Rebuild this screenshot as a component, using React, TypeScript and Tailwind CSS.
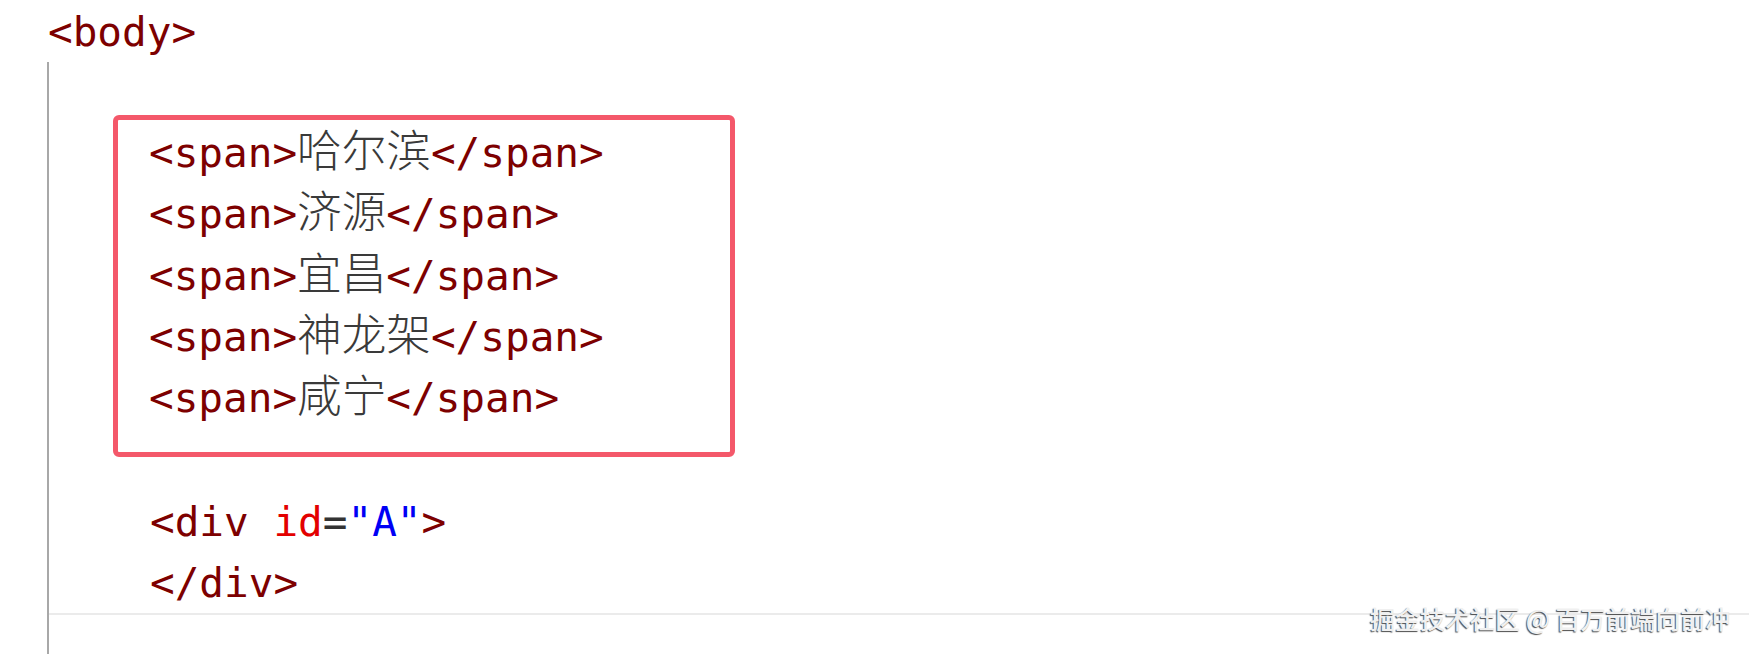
import React from 'react';

const cities = ['哈尔滨', '济源', '宜昌', '神龙架', '咸宁'];

const Tag: React.FC<{ children: React.ReactNode }> = ({ children }) => (
  <span className="text-[#7d0000]">{children}</span>
);

const App: React.FC = () => {
  return (
    <div className="relative w-[1749px] h-[654px] overflow-hidden bg-white font-['DejaVu_Sans_Mono',monospace] text-[41px] leading-[61.25px] text-[#7d0000]">
      {/* opening body tag */}
      <div className="h-[62px] pt-[1.5px] pl-[48px] whitespace-pre">
        <Tag>&lt;body&gt;</Tag>
      </div>

      {/* indented block with guide line */}
      <div className="ml-[47px] h-[592px] border-l-2 border-[#a8a8a8] flex flex-col">
        <div className="h-[53px] shrink-0" />

        {/* highlighted spans */}
        <div className="ml-[64px] w-[622px] shrink-0 border-[5px] border-[#f4586a] rounded-[6px] pt-[3px] pb-[22.75px] pl-[31px]">
          {cities.map((city) => (
            <div key={city} className="h-[61.25px] whitespace-pre">
              <Tag>&lt;span&gt;</Tag>
              <span className="font-['Noto_Sans_CJK_SC',sans-serif] font-light text-[44.6px] leading-none text-[#3a3a3a]">
                {city}
              </span>
              <Tag>&lt;/span&gt;</Tag>
            </div>
          ))}
        </div>

        <div className="h-[35px] shrink-0" />

        <div className="h-[61px] shrink-0 pl-[101px] whitespace-pre">
          <Tag>&lt;div </Tag>
          <span className="text-[#e30000]">id</span>
          <span className="text-[#333333]">=</span>
          <span className="text-[#0000f5]">"A"</span>
          <Tag>&gt;</Tag>
        </div>
        <div className="h-[60px] shrink-0 pl-[101px] whitespace-pre">
          <Tag>&lt;/div&gt;</Tag>
        </div>
        <div className="h-[2px] shrink-0 bg-[#ebebeb]" />
      </div>

      {/* watermark */}
      <div className="absolute left-[1370px] top-[606px] whitespace-pre font-['Noto_Sans_CJK_SC',sans-serif] font-medium text-[25px] leading-[25px] text-[#f0f0f0] [text-shadow:-1px_1px_1px_rgba(0,0,0,0.7)]">
        掘金技术社区 @ 百万前端向前冲
      </div>
    </div>
  );
};

export default App;
